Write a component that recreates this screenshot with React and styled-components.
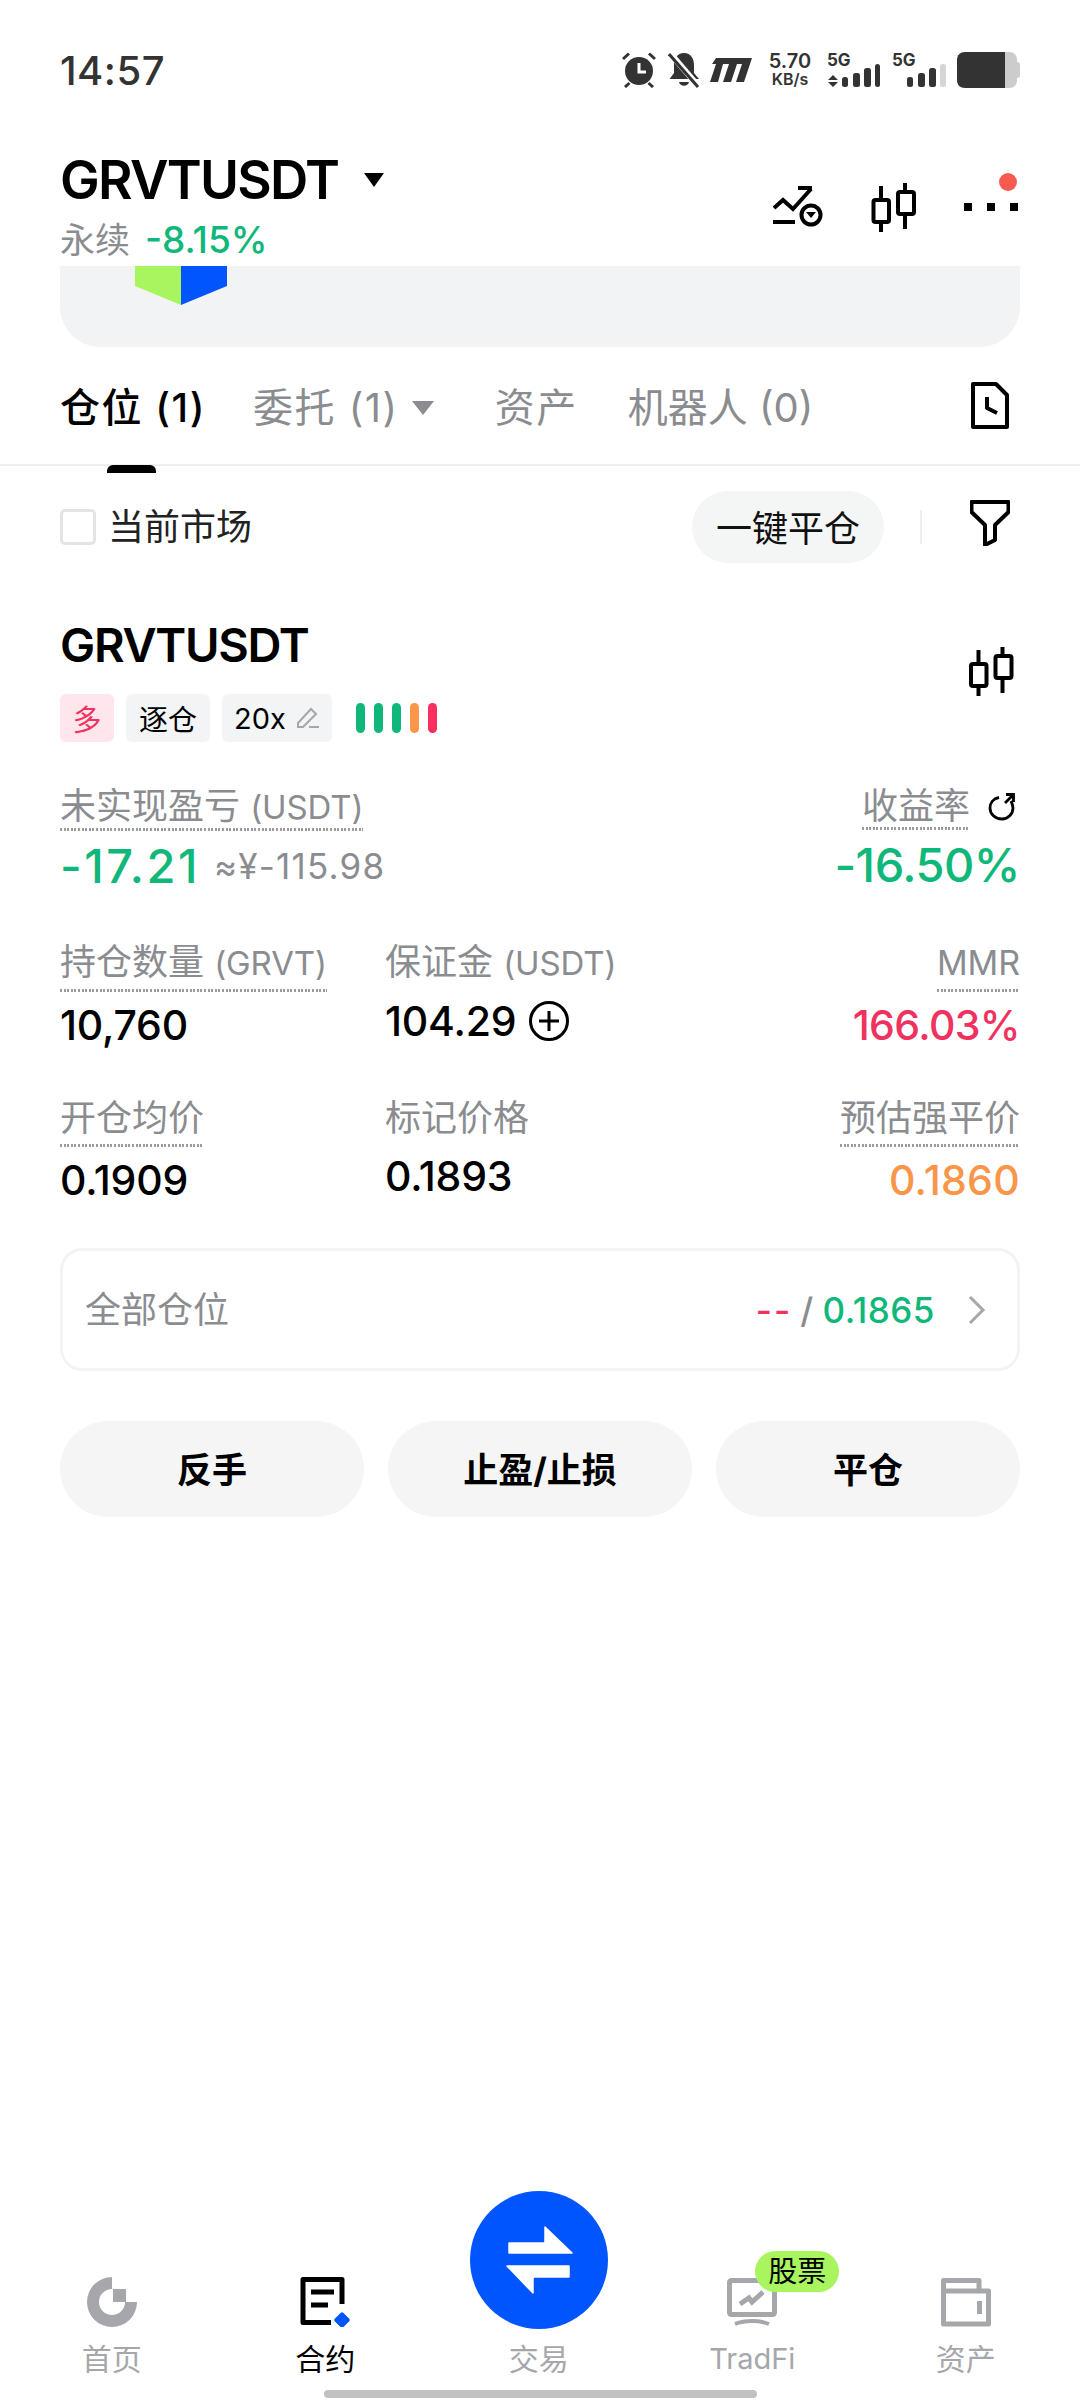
import React from "react";
import styled, { createGlobalStyle } from "styled-components";

const GREEN = "#0fb87a";
const RED = "#f0325f";
const ORANGE = "#f9964a";
const GRAY = "#8a8c90";
const NAVGRAY = "#a5a7ab";
const BLUE = "#0055ff";

const Global = createGlobalStyle`
  html, body { margin: 0; padding: 0; background: #fff; }
  * { box-sizing: border-box; }
  body { font-family: Inter, "Noto Sans CJK SC", sans-serif; color: #000; }
`;

const Page = styled.div`
  width: 1080px;
  height: 2400px;
  display: flex;
  flex-direction: column;
  overflow: hidden;
  background: #fff;
`;

const StatusBar = styled.div`
  height: 140px;
  padding: 0 60px;
  display: flex;
  align-items: center;
  justify-content: space-between;
  color: #333;
`;
const Time = styled.div`
  font-size: 40px;
  font-weight: 500;
  letter-spacing: 0.5px;
`;
const StatusIcons = styled.div`
  display: flex;
  align-items: center;
  height: 36px;
  svg { display: block; flex: none; }
`;
const Speed = styled.div`
  width: 44px;
  margin: 0 15px 0 16px;
  display: flex;
  flex-direction: column;
  align-items: center;
  font-weight: 600;
  white-space: nowrap;
`;
const SpeedTop = styled.span`
  font-size: 20px;
  line-height: 19px;
`;
const SpeedUnit = styled.span`
  font-size: 16px;
  line-height: 17px;
`;
const Signal = styled.div`
  position: relative;
  width: ${(p) => p.$w}px;
  height: 36px;
  margin-right: ${(p) => p.$mr}px;
`;
const SignalLabel = styled.span`
  position: absolute;
  left: 0;
  top: 0;
  font-size: 17px;
  line-height: 16px;
  font-weight: 700;
`;

const Header = styled.div`
  height: 126px;
  padding: 7px 60px 0 60px;
  display: flex;
  justify-content: space-between;
`;
const TitleBlock = styled.div`
  display: flex;
  flex-direction: column;
`;
const TitleRow = styled.div`
  display: flex;
  align-items: center;
  height: 66px;
`;
const Title = styled.div`
  font-size: 53px;
  line-height: 66px;
  font-weight: 600;
  letter-spacing: -1.7px;
`;
const Caret = styled.span`
  width: 0;
  height: 0;
  margin-left: 26px;
  border-left: 10.5px solid transparent;
  border-right: 10.5px solid transparent;
  border-top: 14px solid #000;
`;
const SubRow = styled.div`
  margin-top: 7px;
  display: flex;
  gap: 15px;
  font-size: 35px;
  line-height: 40px;
  color: ${GRAY};
`;
const Change = styled.span`
  color: ${GREEN};
  font-weight: 500;
  font-size: 37px;
`;
const HeadIcons = styled.div`
  display: flex;
  align-items: flex-start;
  padding-top: 36px;
  svg { display: block; }
`;
const IconSlot = styled.div`
  margin-left: ${(p) => p.$ml}px;
  margin-top: ${(p) => p.$mt || 0}px;
`;
const MoreButton = styled.div`
  position: relative;
  width: 56px;
  margin-left: 48px;
  padding-top: 20px;
  display: flex;
  gap: 15px;
`;
const MoreDot = styled.span`
  width: 8px;
  height: 8px;
  background: #000;
`;
const RedDot = styled.span`
  position: absolute;
  right: 3px;
  top: -10px;
  width: 18px;
  height: 18px;
  border-radius: 50%;
  background: #f85a50;
`;

const BannerWrap = styled.div`
  padding: 0 60px;
`;
const Banner = styled.div`
  height: 81px;
  padding-left: 75px;
  background: #f2f3f5;
  border-radius: 0 0 40px 40px;
  svg { display: block; }
`;

const Tabs = styled.div`
  position: relative;
  height: 119px;
  padding: 0 71px 0 60px;
  display: flex;
  align-items: center;
  border-bottom: 2px solid #efefef;
`;
const Tab = styled.div`
  position: relative;
  margin-right: ${(p) => p.$mr || 0}px;
  padding-top: 4px;
  font-size: 40px;
  line-height: 50px;
  letter-spacing: ${(p) => p.$ls ?? 1.5}px;
  font-weight: ${(p) => (p.$active ? 500 : 400)};
  color: ${(p) => (p.$active ? "#000" : GRAY)};
  white-space: nowrap;
`;
const TabMark = styled.span`
  position: absolute;
  left: 47px;
  top: 86px;
  width: 49px;
  height: 8px;
  border-radius: 6px 6px 0 0;
  background: #000;
`;
const TabCaret = styled.span`
  width: 0;
  height: 0;
  margin: 4px 61px 0 13px;
  border-left: 11px solid transparent;
  border-right: 11px solid transparent;
  border-top: 14px solid ${GRAY};
`;
const TabEnd = styled.div`
  margin-left: auto;
  svg { display: block; }
`;

const FilterRow = styled.div`
  height: 122px;
  padding: 0 70px 0 60px;
  display: flex;
  align-items: center;
`;
const Check = styled.span`
  width: 36px;
  height: 36px;
  border: 3px solid #e3e4e6;
  border-radius: 5px;
`;
const CheckLabel = styled.span`
  margin: -6px 0 0 12px;
  font-size: 36px;
  color: #222;
`;
const Pill = styled.div`
  margin-left: auto;
  width: 192px;
  height: 72px;
  border-radius: 36px;
  background: #f4f5f5;
  display: flex;
  align-items: center;
  justify-content: center;
  font-size: 36px;
  padding-bottom: 3px;
  color: #111;
`;
const VLine = styled.span`
  width: 2px;
  height: 34px;
  margin: 0 48px 0 36px;
  background: #eee;
`;
const FilterIcon = styled.div`
  margin-top: -8px;
  svg { display: block; }
`;

const Card = styled.div`
  padding: 27px 60px 0;
`;
const CardHead = styled.div`
  display: flex;
  justify-content: space-between;
`;
const CardTitle = styled.div`
  font-size: 47px;
  line-height: 60px;
  font-weight: 600;
  letter-spacing: -1.3px;
`;
const Tags = styled.div`
  margin-top: 19px;
  display: flex;
  align-items: center;
  gap: 12px;
`;
const Tag = styled.span`
  height: 48px;
  width: ${(p) => p.$w}px;
  border-radius: 6px;
  display: flex;
  align-items: center;
  justify-content: center;
  gap: 10px;
  font-size: 29px;
  background: ${(p) => (p.$red ? "#ffe6ec" : "#f3f4f5")};
  color: ${(p) => (p.$red ? RED : "#000")};
`;
const Bars = styled.div`
  margin-left: 12px;
  display: flex;
  gap: 9px;
`;
const Bar = styled.span`
  width: 9px;
  height: 30px;
  border-radius: 5px;
  background: ${(p) => p.$c};
`;
const CardIcon = styled.div`
  margin: 32px 6px 0 0;
  svg { display: block; }
`;

const MetricRow = styled.div`
  display: grid;
  grid-template-columns: 325px 1fr auto;
  margin-top: ${(p) => p.$mt}px;
`;
const PairRow = styled.div`
  display: flex;
  justify-content: space-between;
  margin-top: 44px;
`;
const Metric = styled.div`
  display: flex;
  flex-direction: column;
  align-items: ${(p) => (p.$right ? "flex-end" : "flex-start")};
`;
const LabelLine = styled.div`
  display: flex;
  align-items: flex-start;
  gap: 18px;
`;
const Label = styled.span`
  display: inline-block;
  font-size: 36px;
  line-height: 40px;
  color: ${GRAY};
  white-space: nowrap;
  padding-bottom: ${(p) => p.$pb}px;
  background: ${(p) =>
    p.$plain
      ? "none"
      : "repeating-linear-gradient(90deg, #9a9c9f 0 2px, transparent 2px 3.6px) left bottom / 100% 3px no-repeat"};
`;
const Unit = styled.span`
  font-size: ${(p) => p.$s || 33}px;
  letter-spacing: -0.1px;
`;
const Big = styled.span`
  font-size: 47px;
  line-height: 70px;
  font-weight: 500;
  letter-spacing: ${(p) => p.$ls}px;
  color: ${GREEN};
`;
const ValueLine = styled.div`
  display: flex;
  align-items: center;
  gap: 14px;
`;
const Approx = styled.span`
  font-size: 35px;
  letter-spacing: 1.2px;
  color: ${GRAY};
`;
const Value = styled.div`
  display: flex;
  align-items: center;
  gap: 12px;
  font-size: 41px;
  line-height: 66px;
  font-weight: 500;
  letter-spacing: ${(p) => p.$ls ?? -0.2}px;
  color: ${(p) => p.$c || "#000"};
`;

const SummaryBox = styled.div`
  margin-top: 35px;
  height: 123px;
  padding: 0 30px 0 22px;
  border: 3px solid #f2f3f4;
  border-radius: 22px;
  display: flex;
  align-items: center;
  justify-content: space-between;
  font-size: 36px;
  color: ${GRAY};
`;
const SummaryLabel = styled.span`
  margin-top: -6px;
`;
const SummaryRight = styled.div`
  display: flex;
  align-items: center;
  font-weight: 500;
  font-size: 35px;
  letter-spacing: 0.5px;
`;
const Colored = styled.span`
  color: ${(p) => p.$c};
  margin: ${(p) => p.$m || "0"};
  letter-spacing: ${(p) => p.$ls || "inherit"};
`;
const Chevron = styled.div`
  margin-left: 32px;
  svg { display: block; }
`;

const Actions = styled.div`
  margin-top: 50px;
  display: grid;
  grid-template-columns: repeat(3, 1fr);
  gap: 24px;
`;
const Action = styled.div`
  height: 96px;
  padding-bottom: 3px;
  border-radius: 48px;
  background: #f5f5f5;
  display: flex;
  align-items: center;
  justify-content: center;
  font-size: 35px;
  font-weight: 700;
  color: #000;
`;

const Nav = styled.div`
  margin-top: auto;
  padding: 0 0 10px 5px;
  display: grid;
  grid-template-columns: repeat(5, 213.5px);
  align-items: end;
`;
const NavItem = styled.div`
  display: flex;
  flex-direction: column;
  align-items: center;
  svg { display: block; }
`;
const NavIcon = styled.div`
  position: relative;
  width: 50px;
  height: 50px;
`;
const NavLabel = styled.div`
  margin-top: ${(p) => p.$mt || 11}px;
  font-size: ${(p) => p.$size || 30}px;
  line-height: 42px;
  color: ${(p) => (p.$active ? "#000" : NAVGRAY)};
  font-weight: 400;
`;
const TradeCircle = styled.div`
  width: 138px;
  height: 138px;
  border-radius: 50%;
  background: ${BLUE};
`;
const Badge = styled.span`
  position: absolute;
  left: 28px;
  top: -26px;
  width: 84px;
  height: 41px;
  border-radius: 21px;
  background: #a8f55f;
  color: #000;
  font-size: 29px;
  line-height: 41px;
  text-align: center;
`;
const HomeBar = styled.div`
  align-self: center;
  width: 433px;
  height: 8px;
  margin-bottom: 2px;
  border-radius: 4px;
  background: #c2c2c2;
`;

const Candle = ({ w = 45, h = 49, sw = 4 }) => (
  <svg width={w} height={h} viewBox="0 0 45 49" fill="none" stroke="#000" strokeWidth={sw}>
    <path d="M10 3V17M10 39V49M34 0V9M34 31V46" />
    <rect x="2.5" y="17" width="15.5" height="22" rx="2" />
    <rect x="27" y="9" width="16" height="22" rx="2" />
  </svg>
);

export default function App() {
  return (
    <Page>
      <Global />
      <StatusBar>
        <Time>14:57</Time>
        <StatusIcons>
          <svg width="34" height="36" viewBox="0 0 34 36" fill="none">
            <circle cx="17" cy="19" r="14" fill="#333" />
            <path d="M17 11V20H24" stroke="#fff" strokeWidth="3" />
            <path d="M1 7L7 1.5M33 7L27 1.5M3 35L7.5 31M31 35L26.5 31" stroke="#333" strokeWidth="3" />
          </svg>
          <svg width="32" height="36" viewBox="0 0 32 36" style={{ marginLeft: 12 }} fill="none">
            <path d="M16 1C23 1 26 7 26 13V21L31 27H1.5L6 21V13C6 7 9 1 16 1Z" fill="#333" />
            <path d="M11 30H21C20 35 12 35 11 30Z" fill="#333" />
            <path d="M2 1L31 35" stroke="#fff" strokeWidth="6" />
            <path d="M1 2L30 35" stroke="#333" strokeWidth="3" />
          </svg>
          <svg width="42" height="36" viewBox="0 0 42 36" style={{ marginLeft: 10 }}>
            <path d="M6 6H42L34 30H26L32 12H27L21 30H13L19 12H13L8 30H0L6 12H2Z" fill="#333" />
          </svg>
          <Speed>
            <SpeedTop>5.70</SpeedTop>
            <SpeedUnit>KB/s</SpeedUnit>
          </Speed>
          <Signal $w={53} $mr={12}>
            <SignalLabel>5G</SignalLabel>
            <svg width="53" height="36" viewBox="0 0 53 36">
              <path d="M6 23L11 28H1ZM6 35L1 30H11Z" fill="#333" />
              <rect x="15" y="25" width="6" height="10" rx="2.5" fill="#333" />
              <rect x="26" y="21" width="7" height="14" rx="2.5" fill="#333" />
              <rect x="37" y="16" width="7" height="19" rx="2.5" fill="#333" />
              <rect x="48" y="12" width="5" height="23" rx="2.5" fill="#333" />
            </svg>
          </Signal>
          <Signal $w={54} $mr={11}>
            <SignalLabel>5G</SignalLabel>
            <svg width="54" height="36" viewBox="0 0 54 36">
              <rect x="15" y="25" width="6" height="10" rx="2.5" fill="#333" />
              <rect x="26" y="21" width="7" height="14" rx="2.5" fill="#333" />
              <rect x="37" y="16" width="7" height="19" rx="2.5" fill="#333" />
              <rect x="48" y="12" width="6" height="23" rx="2.5" fill="#d6d6d6" />
            </svg>
          </Signal>
          <svg width="63" height="36" viewBox="0 0 63 36">
            <path d="M48 0H52C57 0 60 3 60 8V28C60 33 57 36 52 36H48Z" fill="#ccc" />
            <path d="M60 10C62 10 63 11 63 13V23C63 25 62 26 60 26Z" fill="#ccc" />
            <path d="M8 0H48V36H8C3 36 0 33 0 28V8C0 3 3 0 8 0Z" fill="#333" />
          </svg>
        </StatusIcons>
      </StatusBar>

      <Header>
        <TitleBlock>
          <TitleRow>
            <Title>GRVTUSDT</Title>
            <Caret />
          </TitleRow>
          <SubRow>
            <span>永续</span>
            <Change>-8.15%</Change>
          </SubRow>
        </TitleBlock>
        <HeadIcons>
          <IconSlot $ml={0} $mt={2}>
            <svg width="50" height="42" viewBox="0 0 50 42" fill="none" stroke="#000" strokeWidth="4">
              <path d="M1 23L10 15L20 24L38 4" />
              <path d="M25 3H39" />
              <path d="M0 37H22" />
              <circle cx="38" cy="30" r="9.5" />
              <path d="M33 27H43L38 33Z" fill="#000" stroke="none" />
            </svg>
          </IconSlot>
          <IconSlot $ml={48}>
            <Candle />
          </IconSlot>
          <MoreButton>
            <MoreDot />
            <MoreDot />
            <MoreDot />
            <RedDot />
          </MoreButton>
        </HeadIcons>
      </Header>

      <BannerWrap>
        <Banner>
          <svg width="92" height="39" viewBox="0 0 92 39">
            <path d="M0 0H46V39L0 20Z" fill="#a8f55f" />
            <path d="M46 0H92V20L46 39Z" fill={BLUE} />
          </svg>
        </Banner>
      </BannerWrap>

      <Tabs>
        <Tab $active $mr={47}>
          仓位 (1)
          <TabMark />
        </Tab>
        <Tab>委托 (1)</Tab>
        <TabCaret />
        <Tab $mr={50}>资产</Tab>
        <Tab $ls={0}>机器人 (0)</Tab>
        <TabEnd>
          <svg width="38" height="47" viewBox="0 0 38 47" fill="none" stroke="#000" strokeWidth="4" strokeLinejoin="round">
            <path d="M2 2H25L36 13V45H2Z" />
            <path d="M16 15V26L26 31" />
          </svg>
        </TabEnd>
      </Tabs>

      <FilterRow>
        <Check />
        <CheckLabel>当前市场</CheckLabel>
        <Pill>一键平仓</Pill>
        <VLine />
        <FilterIcon>
          <svg width="40" height="46" viewBox="0 0 40 46" fill="none" stroke="#000" strokeWidth="4" strokeLinejoin="round">
            <path d="M1.5 2H38.5V12L25 25V40L15 45V25L1.5 12Z" />
          </svg>
        </FilterIcon>
      </FilterRow>

      <Card>
        <CardHead>
          <div>
            <CardTitle>GRVTUSDT</CardTitle>
            <Tags>
              <Tag $red $w={54}>多</Tag>
              <Tag $w={84}>逐仓</Tag>
              <Tag $w={110}>
                20x
                <svg width="24" height="24" viewBox="0 0 24 24" fill="none" stroke={NAVGRAY} strokeWidth="2">
                  <path d="M2 17L15 3L20 8L7 21H2Z" />
                  <path d="M13 21H23" />
                </svg>
              </Tag>
              <Bars>
                <Bar $c={GREEN} />
                <Bar $c={GREEN} />
                <Bar $c={GREEN} />
                <Bar $c={ORANGE} />
                <Bar $c="#fb2f5e" />
              </Bars>
            </Tags>
          </div>
          <CardIcon>
            <Candle w={46} h={49} />
          </CardIcon>
        </CardHead>

        <PairRow>
          <Metric>
            <Label $pb={4}>未实现盈亏 <Unit>(USDT)</Unit></Label>
            <ValueLine>
              <Big $ls={2.5}>-17.21</Big>
              <Approx>≈¥-115.98</Approx>
            </ValueLine>
          </Metric>
          <Metric $right>
            <LabelLine>
              <Label $pb={4}>收益率</Label>
              <svg width="28" height="30" viewBox="0 0 28 30" fill="none" stroke="#000" strokeWidth="2.8" style={{ marginTop: 6, marginRight: 4 }}>
                <path d="M11 5.5C5 6.5 2 11 2 16C2 22 7 27 14 27C20 27 25 22 25 16C25 13 24 11 23 9" />
                <path d="M17 11L25 3M18 2.5H25.5V10" />
              </svg>
            </LabelLine>
            <Big $ls={-0.5}>-16.50%</Big>
          </Metric>
        </PairRow>

        <MetricRow $mt={41}>
          <Metric>
            <Label $pb={9}>持仓数量 <Unit>(GRVT)</Unit></Label>
            <Value>10,760</Value>
          </Metric>
          <Metric>
            <Label $plain $pb={5}>保证金 <Unit>(USDT)</Unit></Label>
            <Value>
              104.29
              <svg width="42" height="42" viewBox="0 0 42 42" fill="none" stroke="#000" strokeWidth="3">
                <circle cx="21" cy="21" r="18.5" />
                <path d="M21 11V31M11 21H31" />
              </svg>
            </Value>
          </Metric>
          <Metric $right>
            <Label $pb={9}><Unit $s={34}>MMR</Unit></Label>
            <Value $c={RED} $ls={-0.6}>166.03%</Value>
          </Metric>
        </MetricRow>

        <MetricRow $mt={40}>
          <Metric>
            <Label $pb={9}>开仓均价</Label>
            <Value>0.1909</Value>
          </Metric>
          <Metric>
            <Label $plain $pb={5}>标记价格</Label>
            <Value>0.1893</Value>
          </Metric>
          <Metric $right>
            <Label $pb={9}>预估强平价</Label>
            <Value $c={ORANGE} $ls={0.3}>0.1860</Value>
          </Metric>
        </MetricRow>

        <SummaryBox>
          <SummaryLabel>全部仓位</SummaryLabel>
          <SummaryRight>
            <Colored $c={RED} $ls="2px">--</Colored>
            <Colored $c={GRAY} $m="0 9px 0 8px">/</Colored>
            <Colored $c={GREEN}>0.1865</Colored>
            <Chevron>
              <svg width="20" height="30" viewBox="0 0 20 30" fill="none" stroke={NAVGRAY} strokeWidth="3">
                <path d="M3 2L16 15L3 28" />
              </svg>
            </Chevron>
          </SummaryRight>
        </SummaryBox>

        <Actions>
          <Action>反手</Action>
          <Action>止盈/止损</Action>
          <Action>平仓</Action>
        </Actions>
      </Card>

      <Nav>
        <NavItem>
          <NavIcon>
            <svg width="50" height="50" viewBox="0 0 50 50" fill={NAVGRAY}>
              <path d="M25 0A25 25 0 1 0 50 25H38A13 13 0 1 1 25 12Z" />
              <rect x="26" y="12" width="13" height="13" />
            </svg>
          </NavIcon>
          <NavLabel>首页</NavLabel>
        </NavItem>
        <NavItem>
          <NavIcon>
            <svg width="50" height="50" viewBox="0 0 50 50" fill="none">
              <path d="M31 45.5H3V2.5H42V27" stroke="#000" strokeWidth="5" strokeLinejoin="round" />
              <path d="M11 15H34M11 28H28" stroke="#000" strokeWidth="5" />
              <rect x="36" y="37" width="12" height="12" rx="2" transform="rotate(45 42 43)" fill={BLUE} />
            </svg>
          </NavIcon>
          <NavLabel $active>合约</NavLabel>
        </NavItem>
        <NavItem>
          <TradeCircle>
            <svg width="138" height="138" viewBox="0 0 138 138" fill="#fff" stroke="#fff" strokeWidth="1.5" strokeLinejoin="round">
              <path d="M39 52H75V36L102 62H39Z" />
              <path d="M37 75H99V86H63V102Z" />
            </svg>
          </TradeCircle>
          <NavLabel $mt={9}>交易</NavLabel>
        </NavItem>
        <NavItem>
          <NavIcon>
            <svg width="50" height="50" viewBox="0 0 50 50" fill="none" stroke={NAVGRAY}>
              <rect x="2.5" y="3.5" width="45" height="34" rx="2" strokeWidth="5" />
              <path d="M13 27L22 21L25 25L36 15" strokeWidth="5" />
              <path d="M8 47C18 43 32 43 42 47" strokeWidth="4" />
            </svg>
            <Badge>股票</Badge>
          </NavIcon>
          <NavLabel $size={29}>TradFi</NavLabel>
        </NavItem>
        <NavItem>
          <NavIcon>
            <svg width="50" height="50" viewBox="0 0 50 50" fill="none" stroke={NAVGRAY} strokeWidth="5" strokeLinejoin="round">
              <path d="M2.5 3.5H38V14H47.5V47H2.5Z" />
              <path d="M2.5 14H38" />
              <path d="M38.5 24V37" />
            </svg>
          </NavIcon>
          <NavLabel>资产</NavLabel>
        </NavItem>
      </Nav>
      <HomeBar />
    </Page>
  );
}
